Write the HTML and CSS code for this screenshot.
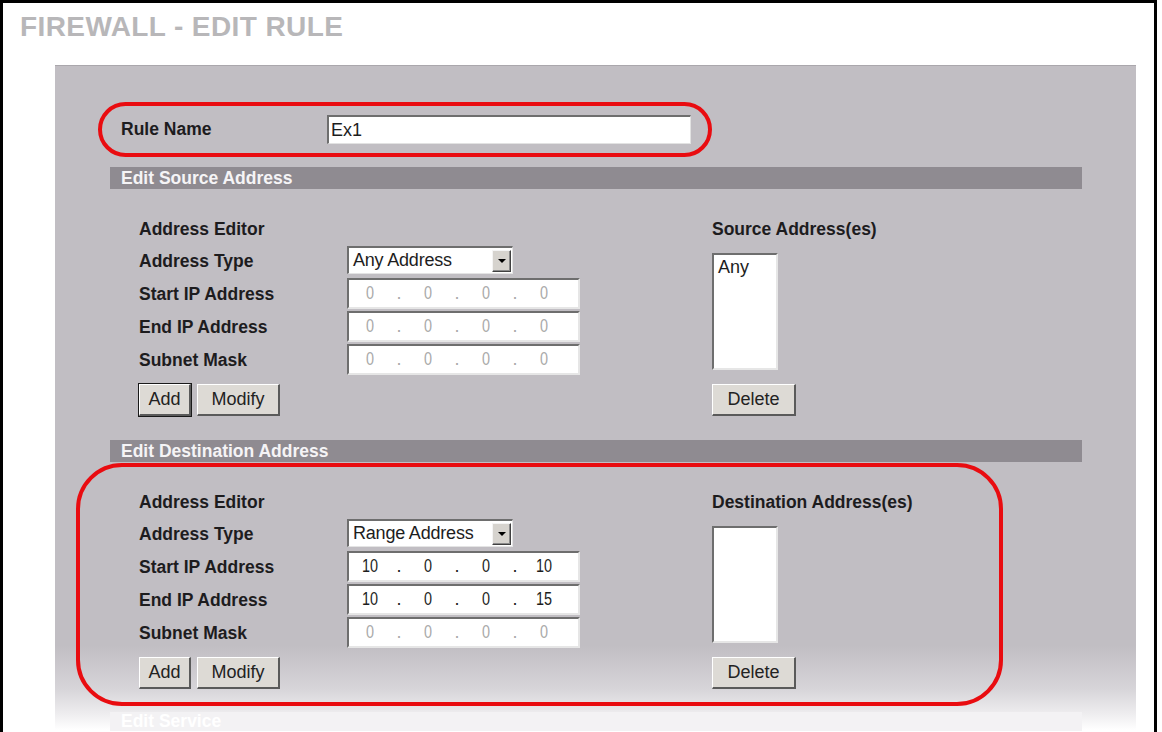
FILE: index.html
```html
<!DOCTYPE html>
<html>
<head>
<meta charset="utf-8">
<title>Firewall - Edit Rule</title>
<link rel="stylesheet" href="styles.css">
</head>
<body>
<div class="frame">
  <h1 class="title">FIREWALL - EDIT RULE</h1>
  <div class="panel">
    <div class="callout callout-rule">
      <span class="label rule-label">Rule Name</span>
      <div class="textbox">Ex1</div>
    </div>

    <div class="bar bar-first">Edit Source Address</div>
    <div class="section">
      <div class="col-left">
        <div class="label head">Address Editor</div>
        <div class="row row-select">
          <span class="label row-label">Address Type</span>
          <div class="select"><span class="select-text">Any Address</span><span class="arrow"><span class="tri"></span></span></div>
        </div>
        <div class="row row-ip first">
          <span class="label row-label">Start IP Address</span>
          <div class="ip disabled"><span class="oct">0</span><span class="dot">.</span><span class="oct">0</span><span class="dot">.</span><span class="oct">0</span><span class="dot">.</span><span class="oct">0</span></div>
        </div>
        <div class="row row-ip">
          <span class="label row-label">End IP Address</span>
          <div class="ip disabled"><span class="oct">0</span><span class="dot">.</span><span class="oct">0</span><span class="dot">.</span><span class="oct">0</span><span class="dot">.</span><span class="oct">0</span></div>
        </div>
        <div class="row row-ip">
          <span class="label row-label">Subnet Mask</span>
          <div class="ip disabled"><span class="oct">0</span><span class="dot">.</span><span class="oct">0</span><span class="dot">.</span><span class="oct">0</span><span class="dot">.</span><span class="oct">0</span></div>
        </div>
        <div class="buttons">
          <button class="btn btn-add btn-default">Add</button>
          <button class="btn btn-modify">Modify</button>
        </div>
      </div>
      <div class="col-right">
        <div class="label head">Source Address(es)</div>
        <div class="listbox">Any</div>
        <div class="buttons">
          <button class="btn btn-delete">Delete</button>
        </div>
      </div>
    </div>

    <div class="bar">Edit Destination Address</div>
    <div class="section callout callout-dest">
      <div class="col-left">
        <div class="label head">Address Editor</div>
        <div class="row row-select">
          <span class="label row-label">Address Type</span>
          <div class="select"><span class="select-text">Range Address</span><span class="arrow"><span class="tri"></span></span></div>
        </div>
        <div class="row row-ip first">
          <span class="label row-label">Start IP Address</span>
          <div class="ip"><span class="oct">10</span><span class="dot">.</span><span class="oct">0</span><span class="dot">.</span><span class="oct">0</span><span class="dot">.</span><span class="oct">10</span></div>
        </div>
        <div class="row row-ip">
          <span class="label row-label">End IP Address</span>
          <div class="ip"><span class="oct">10</span><span class="dot">.</span><span class="oct">0</span><span class="dot">.</span><span class="oct">0</span><span class="dot">.</span><span class="oct">15</span></div>
        </div>
        <div class="row row-ip">
          <span class="label row-label">Subnet Mask</span>
          <div class="ip disabled"><span class="oct">0</span><span class="dot">.</span><span class="oct">0</span><span class="dot">.</span><span class="oct">0</span><span class="dot">.</span><span class="oct">0</span></div>
        </div>
        <div class="buttons">
          <button class="btn btn-add">Add</button>
          <button class="btn btn-modify">Modify</button>
        </div>
      </div>
      <div class="col-right">
        <div class="label head">Destination Address(es)</div>
        <div class="listbox"></div>
        <div class="buttons">
          <button class="btn btn-delete">Delete</button>
        </div>
      </div>
    </div>

    <div class="bar bar-faded">Edit Service</div>
  </div>
</div>
</body>
</html>
```

FILE: styles.css
```css
* {
  box-sizing: border-box;
}

html, body {
  margin: 0;
  padding: 0;
  background: #ffffff;
  height: 732px;
  overflow: hidden;
  font-family: "Liberation Sans", Arial, sans-serif;
}

.frame {
  width: 1157px;
  height: 760px;
  border-top: 3px solid #000;
  border-left: 3px solid #000;
  border-right: 3px solid #000;
  padding-top: 8px;
  overflow: hidden;
}

.title {
  margin: 0 0 0 17px;
  height: 32px;
  line-height: 32px;
  font-size: 28px;
  font-weight: bold;
  letter-spacing: 0.4px;
  color: #b8b7b9;
}

.panel {
  margin: 22px 0 0 52px;
  width: 1081px;
  height: 700px;
  border-top: 1px solid #aaa7ac;
  background: linear-gradient(to bottom,
    #c1bec3 0px,
    #c1bec3 580px,
    #d6d4d8 622px,
    #eeedef 648px,
    #ffffff 664px);
  padding-top: 36px;
}

.label {
  font-size: 17.5px;
  font-weight: bold;
  color: #1d1c1e;
  white-space: nowrap;
}

/* Red annotation callouts */
.callout {
  border: 4px solid #e90c10;
}

.callout-rule {
  margin-left: 43px;
  width: 614px;
  height: 55px;
  border-radius: 28px;
  display: flex;
  align-items: center;
  padding-left: 19px;
  padding-bottom: 1px;
}

.rule-label {
  width: 206px;
}

.textbox {
  width: 364px;
  height: 29px;
  background: #fff;
  border-top: 2px solid #6e6e6e;
  border-left: 2px solid #6e6e6e;
  border-right: 1px solid #e2e2e2;
  border-bottom: 1px solid #e2e2e2;
  font-size: 18px;
  line-height: 26px;
  padding-left: 2px;
  color: #1d1d1d;
}

/* Section header bars */
.bar {
  margin-left: 55px;
  width: 972px;
  height: 22px;
  background: #8f8b91;
  color: #f5f4f6;
  font-size: 17.5px;
  font-weight: bold;
  line-height: 23px;
  padding-left: 11px;
  white-space: nowrap;
}

.bar-first {
  margin-top: 10px;
}

.bar-faded {
  margin-top: 6px;
  height: 19px;
  line-height: 18px;
  background: #f3f2f4;
  color: #ffffff;
}

/* Section bodies */
.section {
  display: flex;
  padding: 30px 0 24px 84px;
}

.callout-dest {
  margin-top: 1px;
  margin-left: 21px;
  width: 927px;
  border-radius: 46px;
  padding: 25px 0 13px 59px;
}

.col-left {
  width: 573px;
  display: flex;
  flex-direction: column;
}

.col-right {
  display: flex;
  flex-direction: column;
}

.head {
  height: 20px;
  line-height: 20px;
}

.row {
  display: flex;
  align-items: center;
}

.row-label {
  width: 208px;
  padding-top: 2px;
}

.row-select {
  margin-top: 7px;
  height: 28px;
}

.row-ip {
  margin-top: 2px;
  height: 31px;
}

.row-ip.first {
  margin-top: 4px;
}

.select {
  width: 166px;
  height: 28px;
  background: #fff;
  border-top: 2px solid #6e6e6e;
  border-left: 2px solid #6e6e6e;
  border-right: 1px solid #e4e4e4;
  border-bottom: 1px solid #e4e4e4;
  display: flex;
  align-items: center;
  justify-content: space-between;
  padding: 0 1px 0 4px;
}

.select-text {
  font-size: 18px;
  color: #1d1d1d;
  white-space: nowrap;
  letter-spacing: -0.2px;
}

.arrow {
  width: 19px;
  height: 22px;
  background: #d6d3ce;
  border-top: 1px solid #f4f4f4;
  border-left: 1px solid #f4f4f4;
  border-right: 1px solid #404040;
  border-bottom: 1px solid #404040;
  box-shadow: inset -1px -1px 0 #8a8a8a;
  display: flex;
  align-items: center;
  justify-content: center;
}

.tri {
  width: 0;
  height: 0;
  border-left: 4px solid transparent;
  border-right: 4px solid transparent;
  border-top: 4px solid #000;
}

.ip {
  width: 233px;
  height: 31px;
  background: #fff;
  border-top: 2px solid #6e6e6e;
  border-left: 2px solid #6e6e6e;
  border-right: 2px solid #e6e6e6;
  border-bottom: 2px solid #e6e6e6;
  display: flex;
  align-items: center;
  font-size: 18px;
  color: #1d1d1d;
}

.ip.disabled {
  color: #a9a9a9;
}

.oct {
  width: 42px;
  text-align: center;
  transform: scaleX(0.8);
}

.dot {
  width: 16px;
  text-align: center;
}

.buttons {
  display: flex;
  gap: 6px;
  margin-top: 9px;
}

.btn {
  appearance: none;
  -webkit-appearance: none;
  margin: 0;
  height: 32px;
  padding: 0;
  background: #dddad5;
  border-top: 1px solid #ffffff;
  border-left: 1px solid #ffffff;
  border-right: 2px solid #5a5a5a;
  border-bottom: 2px solid #5a5a5a;
  font-family: "Liberation Sans", Arial, sans-serif;
  font-size: 18px;
  color: #222;
}

.btn-add {
  width: 52px;
}

.btn-default {
  outline: 1px solid #1a1a1a;
}

.btn-modify {
  width: 83px;
}

.btn-delete {
  width: 84px;
}

.listbox {
  margin-top: 14px;
  width: 66px;
  height: 117px;
  background: #fff;
  border-top: 2px solid #6e6e6e;
  border-left: 2px solid #6e6e6e;
  border-right: 2px solid #e6e6e6;
  border-bottom: 2px solid #e6e6e6;
  font-size: 18px;
  line-height: 22px;
  padding: 1px 0 0 4px;
  color: #1d1d1d;
}

.col-right .buttons {
  margin-top: 14px;
}
```
